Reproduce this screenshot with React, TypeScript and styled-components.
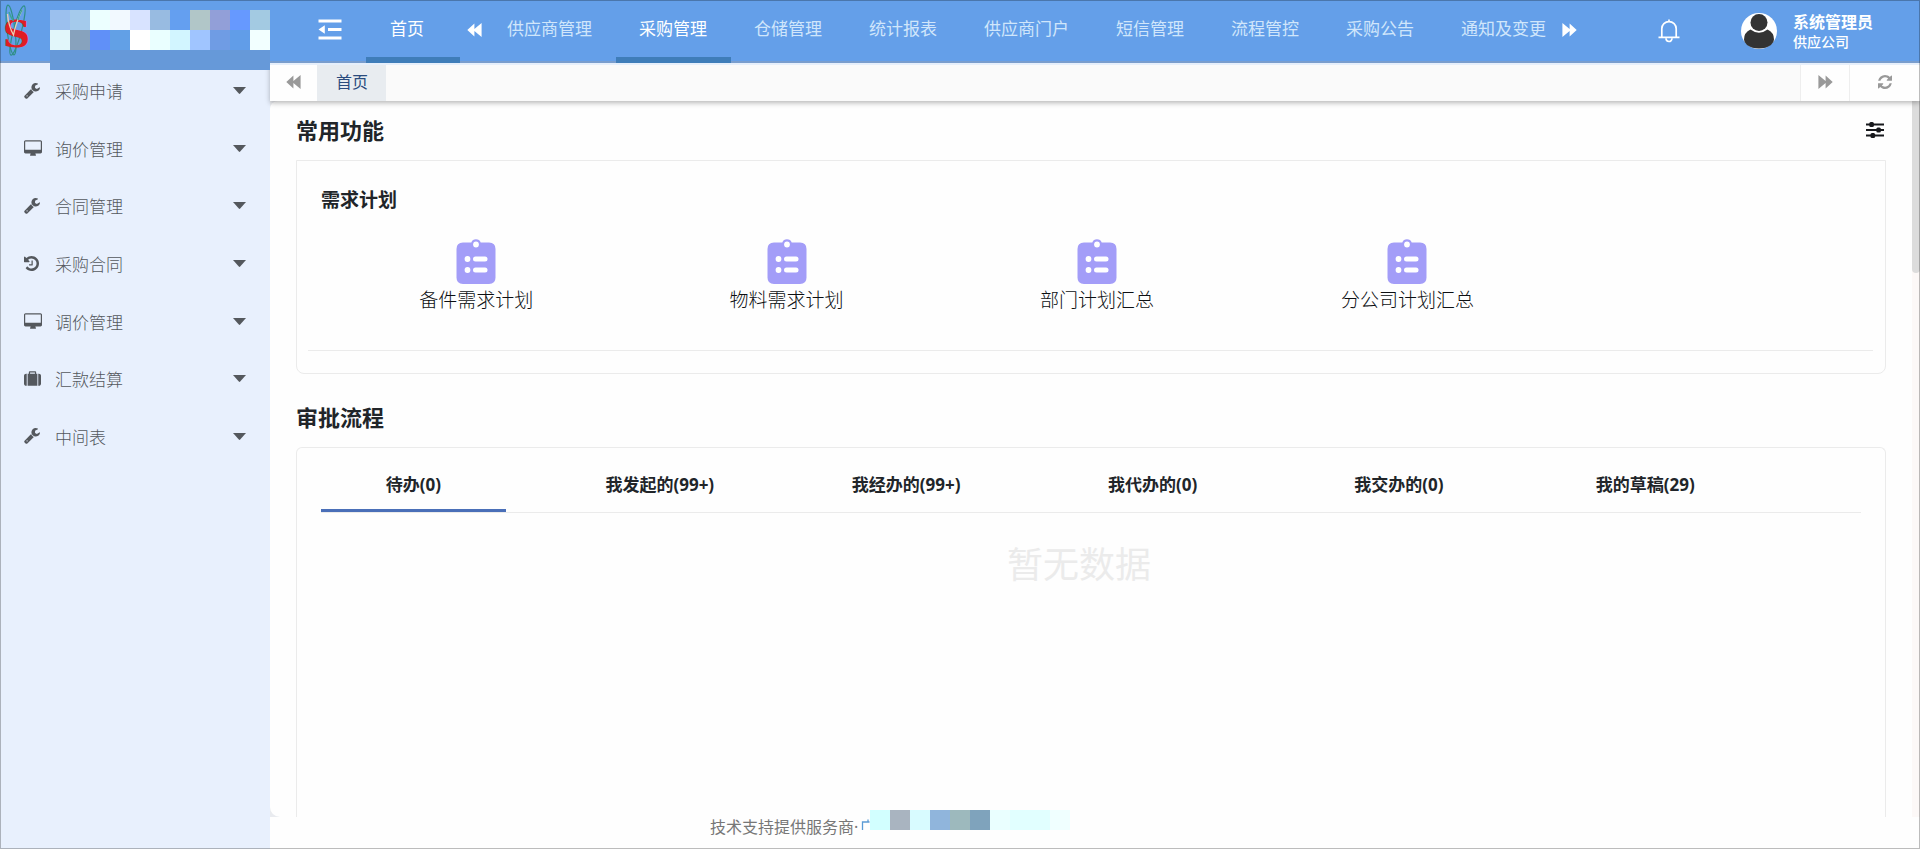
import React, { useState } from "react";
import styled, { createGlobalStyle } from "styled-components";

const GlobalStyle = createGlobalStyle`
  * { box-sizing: border-box; }
  body {
    margin: 0;
    font-family: "Noto Sans", "Noto Sans CJK SC", sans-serif;
    color: #212529;
    background: #fefefe;
  }
  button { font: inherit; color: inherit; background: none; border: 0; padding: 0; cursor: pointer; }
  a { color: inherit; text-decoration: none; }
  h2, h3, ul, p { margin: 0; padding: 0; }
  ul { list-style: none; }
  svg { display: block; flex: none; }
`;

const Shell = styled.div`
  height: 100vh;
  display: flex;
  flex-direction: column;
  overflow: hidden;
  &::after {
    content: "";
    position: fixed;
    inset: 0;
    border: 1px solid rgba(0, 0, 0, 0.26);
    z-index: 10;
    pointer-events: none;
  }
`;

const Header = styled.header`
  position: relative;
  z-index: 3;
  flex: none;
  height: 63px;
  display: flex;
  background: #649fe9;
  box-shadow: inset 0 -2px #799dcd;
  color: #fff;
`;

const Brand = styled.div`
  position: relative;
  flex: none;
  width: 270px;
`;

const Mosaic = styled.div`
  position: absolute;
  left: 50px;
  top: 10px;
  display: grid;
  grid-template-columns: repeat(11, 20px);
  grid-auto-rows: 20px;
`;

const MosaicBase = styled.span`
  grid-column: 1 / -1;
  background: #6699d9;
`;

const Cell = styled.span<{ $color: string }>`
  background: ${(p) => p.$color};
`;

const MenuToggle = styled.button`
  flex: none;
  width: 96px;
  padding: 0 24px 4px 48px;
`;

const HomeLink = styled.a`
  flex: none;
  width: 94px;
  padding-left: 24px;
  font-size: 17px;
  line-height: 57px;
  border-bottom: 6px solid #3f7db9;
`;

const NavArrow = styled.button`
  flex: none;
  width: 24px;
  display: flex;
  align-items: center;
  justify-content: center;
  padding: 0 0 4px 4px;
`;

const Nav = styled.nav`
  display: flex;
  min-width: 0;
  overflow: hidden;
`;

const NavLink = styled.a<{ $active: boolean }>`
  flex: none;
  padding: 0 24px 0 23px;
  font-size: 17px;
  line-height: 57px;
  color: ${(p) => (p.$active ? "#fff" : "#d0e6fb")};
  border-bottom: 6px solid ${(p) => (p.$active ? "#3f7db9" : "transparent")};
  &:last-child { padding-right: 9px; }
`;

const Account = styled.div`
  flex: none;
  margin-left: auto;
  padding: 0 47px 1px 24px;
  display: flex;
  align-items: center;
`;

const BellButton = styled.button`
  margin-right: 61px;
`;

const UserName = styled.div`
  margin-left: 16px;
  font-size: 16px;
  line-height: 22px;
  font-weight: 700;
`;

const Company = styled.div`
  font-size: 14px;
  line-height: 18px;
  font-weight: 500;
`;

const Body = styled.div`
  flex: 1;
  min-height: 0;
  display: flex;
`;

const Sidebar = styled.aside`
  flex: none;
  width: 270px;
  background: #e8f0fd;
`;

const SideList = styled.ul`
  height: 403px;
  display: flex;
  flex-direction: column;
`;

const SideEntry = styled.li`
  flex: 1;
  display: flex;
`;

const SideItem = styled.button`
  flex: 1;
  padding: 0 24px 2px;
  display: flex;
  align-items: center;
  color: #54585d;
  font-size: 17px;
  font-weight: 300;
  text-align: left;
`;

const SideIcon = styled.span`
  width: 31px;
`;

const SideLabel = styled.span`
  flex: 1;
`;

const Main = styled.div`
  flex: 1;
  min-width: 0;
  display: flex;
  flex-direction: column;
`;

const TabBar = styled.div`
  position: relative;
  z-index: 2;
  flex: none;
  height: 38px;
  display: flex;
  background: #fafafa;
  border-top: 2px solid #e6effb;
  box-shadow: 0 2px 5px rgba(0, 0, 0, 0.28);
`;

const TabTool = styled.button<{ $width: number; $divided?: boolean }>`
  width: ${(p) => p.$width}px;
  display: flex;
  align-items: center;
  justify-content: center;
  padding-bottom: 2px;
  background: #fefefe;
  color: #999;
  border-left: ${(p) => (p.$divided ? "1px solid #eee" : "0")};
`;

const PageTab = styled.button`
  padding: 0 18px 2px 19px;
  background: #e8ecf0;
  color: #2a4b7d;
  font-size: 16px;
  line-height: 34px;
`;

const TabSpacer = styled.div`
  flex: 1;
`;

const Viewport = styled.div`
  flex: 1;
  min-height: 0;
  display: flex;
  background: #e9ebef;
`;

const Panel = styled.main`
  flex: 1;
  min-width: 0;
  padding: 0 26px;
  display: flex;
  flex-direction: column;
  background: #fefefe;
  border-radius: 8px 0 0 10px;
  overflow: hidden;
`;

const ScrollTrack = styled.div`
  flex: none;
  width: 8px;
  background: #fcf8f7;
`;

const ScrollThumb = styled.div`
  height: 24%;
  background: #dcdcdc;
  border-radius: 0 0 4px 4px;
`;

const SectionHead = styled.div`
  flex: none;
  height: 59px;
  padding: 0 2px 2px 0;
  display: flex;
  align-items: center;
  justify-content: space-between;
`;

const SectionTitle = styled.h2`
  font-size: 22px;
  line-height: 32px;
  font-weight: 700;
`;

const ShortcutCard = styled.section`
  flex: none;
  margin-bottom: 14px;
  padding: 0 12px 22px 11px;
  border: 1px solid #ebebeb;
  border-radius: 0 0 8px 8px;
`;

const ShortcutGroup = styled.div`
  padding: 25px 0 36px 13px;
  border-bottom: 1px solid #ebebeb;
`;

const GroupTitle = styled.h3`
  font-size: 19px;
  line-height: 28px;
  font-weight: 700;
`;

const ShortcutGrid = styled.div`
  margin-top: 25px;
  display: grid;
  grid-template-columns: repeat(5, 1fr);
`;

const Shortcut = styled.a`
  display: flex;
  flex-direction: column;
  align-items: center;
  gap: 2px;
  color: #0c0f12;
  font-size: 19px;
  line-height: 28px;
  font-weight: 300;
`;

const FlowCard = styled.section`
  flex: 1;
  padding: 0 24px;
  border: 1px solid #ebebeb;
  border-bottom: 0;
  border-radius: 6px 6px 0 0;
`;

const FlowTabs = styled.div`
  display: flex;
  padding-top: 13px;
  border-bottom: 1px solid #ebebeb;
`;

const FlowTab = styled.button<{ $active: boolean }>`
  width: 12%;
  margin-right: 4%;
  font-size: 17px;
  line-height: 48px;
  font-weight: 700;
  white-space: nowrap;
  border-bottom: 3px solid ${(p) => (p.$active ? "#4a6fb8" : "transparent")};
`;

const Empty = styled.p`
  padding: 28px 24px 0 0;
  font-size: 36px;
  line-height: 48px;
  text-align: center;
  color: #ebebeb;
`;

const Footer = styled.footer`
  flex: none;
  height: 32px;
  padding-left: 440px;
  display: flex;
  background: #fefefe;
  color: #777;
  font-size: 16px;
  line-height: 20px;
`;

const Vendor = styled.a`
  display: flex;
  color: #5b9bd5;
`;

const VendorCell = styled.span<{ $color: string }>`
  width: 20px;
  height: 20px;
  margin-top: -7px;
  background: ${(p) => p.$color};
`;

type GlyphProps = { d: string; box: string; width: number; height: number };

const Glyph = ({ d, box, width, height }: GlyphProps) => (
  <svg viewBox={box} width={width} height={height} fill="currentColor" aria-hidden="true">
    <path d={d} />
  </svg>
);

const GLYPHS = {
  wrench: {
    box: "0 128 1664 1664",
    width: 16,
    height: 16,
    d: "M384 1472q0-26-19-45t-45-19-45 19-19 45 19 45 45 19 45-19 19-45zm644-420l-682 682q-37 37-90 37-52 0-91-37l-106-108q-38-36-38-90 0-53 38-91l681-681q39 98 114.5 173.5t173.5 114.5zm634-435q0 39-23 106-47 134-164.5 217.5t-258.5 83.5q-185 0-316.5-131.5t-131.5-316.5 131.5-316.5 316.5-131.5q58 0 121.5 16.5t107.5 46.5q16 11 16 28t-16 28l-293 169v224l193 107q5-3 79-48.5t135.5-81 70.5-35.5q15 0 23.5 10t8.5 25z",
  },
  desktop: {
    box: "0 0 1920 1664",
    width: 18,
    height: 16,
    d: "M1792 992v-832q0-13-9.5-22.5t-22.5-9.5h-1600q-13 0-22.5 9.5t-9.5 22.5v832q0 13 9.5 22.5t22.5 9.5h1600q13 0 22.5-9.5t9.5-22.5zm128-832v1088q0 66-47 113t-113 47h-544q0 37 16 77.5t32 71 16 43.5q0 26-19 45t-45 19h-512q-26 0-45-19t-19-45q0-14 16-44t32-70 16-78h-544q-66 0-113-47t-47-113v-1088q0-66 47-113t113-47h1600q66 0 113 47t47 113z",
  },
  history: {
    box: "0 0 1536 1536",
    width: 15,
    height: 15,
    d: "M1536 768q0 156-61 298t-164 245-245 164-298 61q-172 0-327-72.5t-264-204.5q-7-10-6.5-22.5t8.5-20.5l137-138q10-9 25-9 16 2 23 12 73 95 179 147t225 52q104 0 198.5-40.5t163.5-109.5 109.5-163.5 40.5-198.5-40.5-198.5-109.5-163.5-163.5-109.5-198.5-40.5q-98 0-188 35.5t-160 101.5l137 138q31 30 14 69-17 40-59 40h-448q-26 0-45-19t-19-45v-448q0-42 40-59 39-17 69 14l130 129q107-101 244.5-156.5t284.5-55.5q156 0 298 61t245 164 164 245 61 298zm-640-288v448q0 14-9 23t-23 9h-320q-14 0-23-9t-9-23v-64q0-14 9-23t23-9h224v-352q0-14 9-23t23-9h64q14 0 23 9t9 23z",
  },
  suitcase: {
    box: "0 0 1792 1536",
    width: 17,
    height: 15,
    d: "M640 256h512v-128h-512v128zm-352 0v1280h-64q-92 0-158-66t-66-158v-832q0-92 66-158t158-66h64zm1120 0v1280h-1024v-1280h128v-160q0-40 28-68t68-28h576q40 0 68 28t28 68v160h128zm384 224v832q0 92-66 158t-158 66h-64v-1280h64q92 0 158 66t66 158z",
  },
  refresh: {
    box: "0 0 1536 1536",
    width: 14,
    height: 14,
    d: "M1511 928q0 5-1 7-64 268-268 434.5t-478 166.5q-146 0-282.5-55t-243.5-157l-129 129q-19 19-45 19t-45-19-19-45v-448q0-26 19-45t45-19h448q26 0 45 19t19 45-19 45l-137 137q71 66 161 102t187 36q134 0 250-65t186-179q11-17 53-117 8-23 30-23h192q13 0 22.5 9.5t9.5 22.5zm25-800v448q0 26-19 45t-45 19h-448q-26 0-45-19t-19-45 19-45l138-138q-148-137-349-137-134 0-250 65t-186 179q-11 17-53 117-8 23-30 23h-199q-13 0-22.5-9.5t-9.5-22.5v-7q65-268 270-434.5t480-166.5q146 0 284 55.5t245 156.5l130-129q19-19 45-19t45 19 19 45z",
  },
  backward: { box: "0 0 15 14", width: 15, height: 14, d: "M7.4 0.4v5.6L14.6 0v14L7.4 8v5.6L0.3 7z" },
  forward: { box: "0 0 15 14", width: 15, height: 14, d: "M7.6 0.4v5.6L0.4 0v14L7.6 8v5.6L14.7 7z" },
  caret: { box: "0 0 13 7", width: 13, height: 7, d: "M0 0h13L7.2 6.6q-0.7 0.6-1.4 0z" },
};

const Logo = () => (
  <svg width="34" height="62" viewBox="0 0 34 62" aria-label="S">
    <g fill="none" stroke="#2f8f86" strokeWidth="1.2">
      <ellipse cx="11" cy="30" rx="4" ry="25" transform="rotate(-7 11 30)" />
      <ellipse cx="17.5" cy="30.5" rx="4" ry="25.5" transform="rotate(15 17.5 30.5)" />
    </g>
    <text x="16.5" y="47" textAnchor="middle" fontFamily="DejaVu Serif, serif" fontWeight="700" fontSize="38" fill="#df1d24">
      S
    </text>
    <path d="M7.5 14q1 12 6 21q2-11 8.5-25" fill="none" stroke="#eccfb0" strokeWidth="1.3" />
    <path d="M9 12q1.5 5 4.5 9M22 10q-3 5-4 10" fill="none" stroke="#3aa595" strokeWidth="1.4" />
  </svg>
);

const CollapseIcon = () => (
  <svg width="24" height="21" viewBox="0 0 24 21" fill="currentColor" aria-hidden="true">
    <path d="M0.5 0.5h23v3h-23zM10 9h13.5v3H10zM0.5 17.5h23v3h-23zM0.5 10.5L6.8 6.3v8.4z" />
  </svg>
);

const BellIcon = () => (
  <svg width="22" height="24" viewBox="0 0 22 24" fill="none" stroke="currentColor" strokeWidth="1.7" aria-hidden="true">
    <path d="M3.8 18.3V9.8a7.2 7.2 0 0 1 14.4 0v8.5M0.5 18.3h21M11 0.5v2.2" />
    <path d="M8 19.3a3 3.2 0 0 0 6 0" />
  </svg>
);

const Avatar = () => (
  <svg width="36" height="36" viewBox="0 0 36 36" aria-hidden="true">
    <circle cx="18" cy="18" r="18" fill="#fff" />
    <g fill="#333">
      <circle cx="18" cy="9.5" r="8.5" />
      <path d="M9.500 16.500q8.500 6.500 17 0q6.500 3 6.500 10q0 3-3 5.500q-5 3.500-12 3.500t-12-3.500q-3-2.500-3-5.500q0-7 6.500-10z" />
    </g>
  </svg>
);

const SlidersIcon = () => (
  <svg width="18" height="16" viewBox="0 0 18 16" aria-hidden="true">
    <path d="M0 2.5h18M0 8h18M0 13.5h18" stroke="#17181c" strokeWidth="1.9" />
    <g fill="#17181c">
      <rect x="3.3" y="0" width="4.6" height="5" rx="1.5" />
      <rect x="10.3" y="5.5" width="4.6" height="5" rx="1.5" />
      <rect x="4.5" y="11" width="4.6" height="5" rx="1.5" />
    </g>
  </svg>
);

const ClipboardIcon = () => (
  <svg width="40" height="45" viewBox="0 0 40 45" aria-hidden="true">
    <path
      d="M7 3.5h8.3a5 5 0 0 1 9.4 0H33q6.500 0 6.500 6.500v28.500q0 6.500-6.500 6.500H7q-6.500 0-6.500-6.500V10q0-6.500 6.500-6.500z"
      fill="#a39df8"
    />
    <g fill="#fff">
      <circle cx="20" cy="5.5" r="2.9" />
      <circle cx="11.5" cy="20" r="2.9" />
      <circle cx="11.5" cy="31" r="2.9" />
      <rect x="17" y="17.5" width="14.5" height="5" rx="2.5" />
      <rect x="17" y="28.5" width="14.5" height="5" rx="2.5" />
    </g>
  </svg>
);

const brandCells = [
  "#9bc0ee", "#a4caec", "#ecffff", "#f2f9ff", "#d8e3ff", "#98bbe1", "#649ff0", "#b1c6c8", "#929fd8", "#6699ff", "#a3cae2",
  "#e1f6fa", "#87a2be", "#6090f8", "#62a0e6", "#ffffff", "#eaffff", "#d2f5ff", "#a0c5ff", "#6f9ce4", "#619de8", "#f2ffff",
];

const vendorCells = [
  "#d2ffff", "#a9b4c0", "#d8fbff", "#90b5dc", "#9db9bd", "#7fa3bc", "#eaffff", "#e1ffff", "#e1ffff", "#f0ffff",
];

const navItems = ["供应商管理", "采购管理", "仓储管理", "统计报表", "供应商门户", "短信管理", "流程管控", "采购公告", "通知及变更"];

const sideItems: { icon: keyof typeof GLYPHS; label: string }[] = [
  { icon: "wrench", label: "采购申请" },
  { icon: "desktop", label: "询价管理" },
  { icon: "wrench", label: "合同管理" },
  { icon: "history", label: "采购合同" },
  { icon: "desktop", label: "调价管理" },
  { icon: "suitcase", label: "汇款结算" },
  { icon: "wrench", label: "中间表" },
];

const shortcuts = ["备件需求计划", "物料需求计划", "部门计划汇总", "分公司计划汇总"];

const flowTabs = ["待办(0)", "我发起的(99+)", "我经办的(99+)", "我代办的(0)", "我交办的(0)", "我的草稿(29)"];

export default function App() {
  const [activeNav, setActiveNav] = useState("采购管理");
  const [activeFlow, setActiveFlow] = useState(0);

  return (
    <Shell>
      <GlobalStyle />
      <Header>
        <Brand>
          <Logo />
          <Mosaic aria-hidden="true">
            {brandCells.map((color, i) => (
              <Cell key={i} $color={color} />
            ))}
            <MosaicBase />
          </Mosaic>
        </Brand>
        <MenuToggle aria-label="收起菜单">
          <CollapseIcon />
        </MenuToggle>
        <HomeLink href="#home">首页</HomeLink>
        <NavArrow aria-label="向左">
          <Glyph {...GLYPHS.backward} />
        </NavArrow>
        <Nav>
          {navItems.map((item) => (
            <NavLink key={item} href="#nav" $active={item === activeNav} onClick={() => setActiveNav(item)}>
              {item}
            </NavLink>
          ))}
        </Nav>
        <NavArrow aria-label="向右">
          <Glyph {...GLYPHS.forward} />
        </NavArrow>
        <Account>
          <BellButton aria-label="消息">
            <BellIcon />
          </BellButton>
          <Avatar />
          <UserName>
            系统管理员
            <Company>供应公司</Company>
          </UserName>
        </Account>
      </Header>
      <Body>
        <Sidebar>
          <SideList>
            {sideItems.map((item) => (
              <SideEntry key={item.label}>
                <SideItem>
                  <SideIcon>
                    <Glyph {...GLYPHS[item.icon]} />
                  </SideIcon>
                  <SideLabel>{item.label}</SideLabel>
                  <Glyph {...GLYPHS.caret} />
                </SideItem>
              </SideEntry>
            ))}
          </SideList>
        </Sidebar>
        <Main>
          <TabBar>
            <TabTool $width={47} aria-label="前一页签">
              <Glyph {...GLYPHS.backward} />
            </TabTool>
            <PageTab>首页</PageTab>
            <TabSpacer />
            <TabTool $width={49} $divided aria-label="后一页签">
              <Glyph {...GLYPHS.forward} />
            </TabTool>
            <TabTool $width={71} $divided aria-label="刷新">
              <Glyph {...GLYPHS.refresh} />
            </TabTool>
          </TabBar>
          <Viewport>
            <Panel>
              <SectionHead>
                <SectionTitle>常用功能</SectionTitle>
                <button aria-label="设置">
                  <SlidersIcon />
                </button>
              </SectionHead>
              <ShortcutCard>
                <ShortcutGroup>
                  <GroupTitle>需求计划</GroupTitle>
                  <ShortcutGrid>
                    {shortcuts.map((label) => (
                      <Shortcut key={label} href="#shortcut">
                        <ClipboardIcon />
                        {label}
                      </Shortcut>
                    ))}
                  </ShortcutGrid>
                </ShortcutGroup>
              </ShortcutCard>
              <SectionHead>
                <SectionTitle>审批流程</SectionTitle>
              </SectionHead>
              <FlowCard>
                <FlowTabs>
                  {flowTabs.map((label, i) => (
                    <FlowTab key={label} $active={i === activeFlow} onClick={() => setActiveFlow(i)}>
                      {label}
                    </FlowTab>
                  ))}
                </FlowTabs>
                <Empty>暂无数据</Empty>
              </FlowCard>
            </Panel>
            <ScrollTrack>
              <ScrollThumb />
            </ScrollTrack>
          </Viewport>
          <Footer>
            技术支持提供服务商·
            <Vendor href="#vendor" aria-label="服务商">
              <svg width="12" height="13" viewBox="0 0 12 13" aria-hidden="true">
                <path d="M4.5 13V5h7M10 5V2.5" fill="none" stroke="currentColor" strokeWidth="1.3" />
              </svg>
              {vendorCells.map((color, i) => (
                <VendorCell key={i} $color={color} />
              ))}
            </Vendor>
          </Footer>
        </Main>
      </Body>
    </Shell>
  );
}
